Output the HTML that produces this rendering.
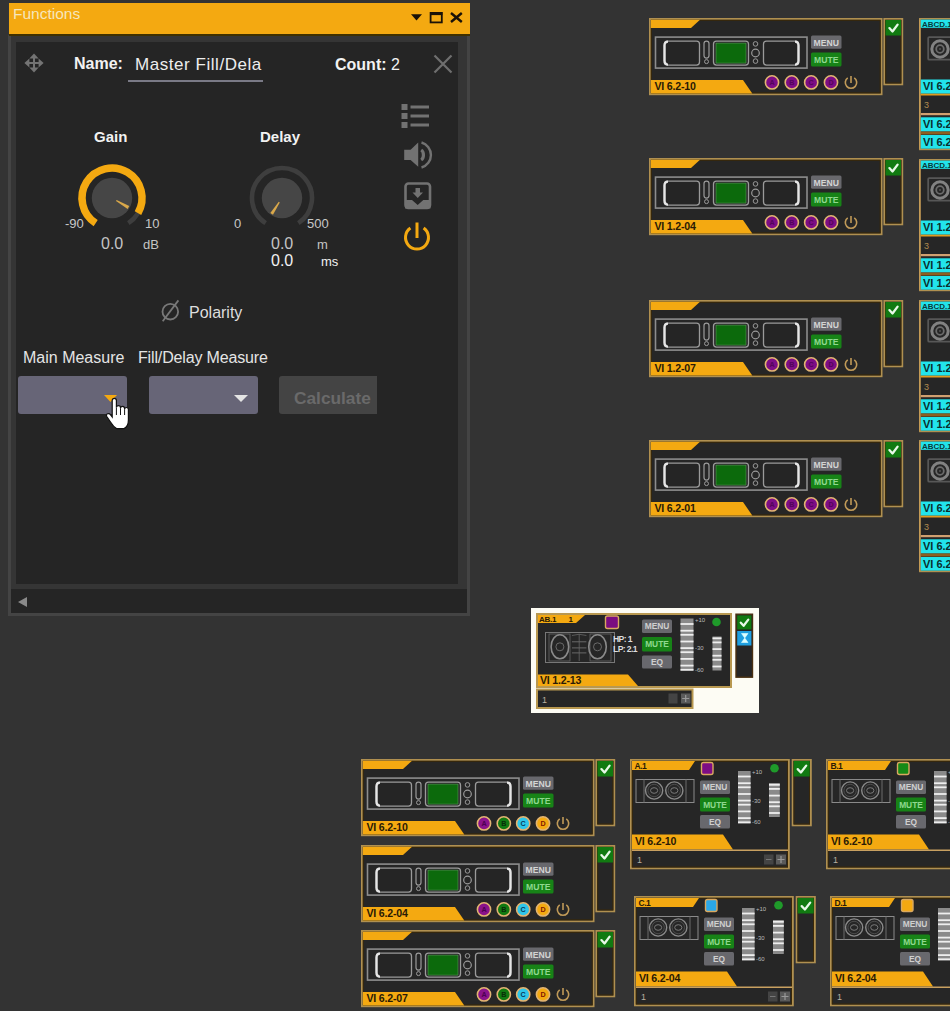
<!DOCTYPE html><html><head><meta charset="utf-8"><style>html,body{margin:0;padding:0;} body{width:950px;height:1011px;overflow:hidden;background:#333333;position:relative;font-family:"Liberation Sans", sans-serif;}.a{position:absolute;white-space:nowrap;}</style></head><body><div class="a" style="left:8px;top:3px;width:462px;height:613px;background:#353535;"></div><div class="a" style="left:8px;top:35px;width:3px;height:581px;background:#444444;"></div><div class="a" style="left:467px;top:35px;width:3px;height:581px;background:#444444;"></div><div class="a" style="left:8px;top:613px;width:462px;height:3px;background:#444444;"></div><div class="a" style="left:9px;top:3px;width:461px;height:32px;background:#f4a911;"></div><div class="a" style="left:9px;top:34px;width:461px;height:1.5px;background:#3f3000;"></div><div class="a" style="left:13px;top:5px;font-size:15.5px;line-height:18px;color:#f6e6bc;">Functions</div><svg class="a" style="left:405px;top:8px" width="62" height="20" viewBox="0 0 62 20"><polygon points="6,6.3 17,6.3 11.5,12.6" fill="#1a1208"/><rect x="25.6" y="4.9" width="11.2" height="9.5" fill="none" stroke="#1a1208" stroke-width="1.8"/><rect x="25" y="4.1" width="12.4" height="3" fill="#1a1208"/><path d="M46,5 L56.8,14 M56.8,5 L46,14" stroke="#1a1208" stroke-width="2.4"/></svg><div class="a" style="left:16px;top:42px;width:442px;height:542px;background:#252525;"></div><div class="a" style="left:11px;top:589px;width:456px;height:24px;background:#252525;"></div><svg class="a" style="left:15px;top:595px" width="16" height="14"><polygon points="3,7 12,2 12,12" fill="#8a8a8a"/></svg><svg class="a" style="left:24px;top:53px" width="20" height="20" viewBox="0 0 20 20"><path d="M10,3 L10,17 M3,10 L17,10" stroke="#747474" stroke-width="2"/><polygon points="10,0.4 5.4,5.4 14.6,5.4" fill="#747474"/><polygon points="10,19.6 5.4,14.6 14.6,14.6" fill="#747474"/><polygon points="0.4,10 5.4,5.4 5.4,14.6" fill="#747474"/><polygon points="19.6,10 14.6,5.4 14.6,14.6" fill="#747474"/></svg><div class="a" style="left:74px;top:54px;font-size:16px;font-weight:bold;line-height:19px;color:#f2f2f2;">Name:</div><div class="a" style="left:135px;top:54.5px;font-size:17px;line-height:20px;color:#eeeeee;letter-spacing:0.55px;">Master Fill/Dela</div><div class="a" style="left:128px;top:80px;width:135px;height:2px;background:#7a7a86;"></div><div class="a" style="left:335px;top:54.5px;font-size:16px;font-weight:bold;line-height:19px;color:#f2f2f2;">Count: <span style="font-weight:normal">2</span></div><svg class="a" style="left:432px;top:54px" width="22" height="20" viewBox="0 0 22 20"><path d="M2.5,1.5 L19.5,18.5 M19.5,1.5 L2.5,18.5" stroke="#6f6f6f" stroke-width="2.2"/></svg><div class="a" style="left:94px;top:128px;font-size:15px;font-weight:bold;line-height:18px;color:#f2f2f2;">Gain</div><div class="a" style="left:260px;top:128px;font-size:15px;font-weight:bold;line-height:18px;color:#f2f2f2;">Delay</div><svg class="a" style="left:72px;top:158px" width="80" height="80" viewBox="72 158 80 80"><path d="M95.66,223.16 A30,30 0 1 1 128.34,223.16" fill="none" stroke="#3e3e3e" stroke-width="4.6"/><path d="M95.66,223.16 A30,30 0 1 1 137.98,213.00" fill="none" stroke="#f4a911" stroke-width="7.5"/><circle cx="112" cy="198" r="20.2" fill="#464646"/><polygon points="116.03,201.02 127.65,208.89 129.25,206.11 116.63,199.98" fill="#d9a84a"/></svg><svg class="a" style="left:242px;top:158px" width="80" height="80" viewBox="242 158 80 80"><path d="M265.66,223.16 A30,30 0 1 1 298.34,223.16" fill="none" stroke="#3e3e3e" stroke-width="4.6"/><circle cx="282" cy="198" r="20.2" fill="#464646"/><polygon points="278.77,201.87 270.31,213.06 272.99,214.81 279.78,202.52" fill="#d9a84a"/></svg><div class="a" style="left:65px;top:217px;font-size:13px;line-height:14px;color:#c8c8c8;">-90</div><div class="a" style="left:145px;top:217px;font-size:13px;line-height:14px;color:#c8c8c8;">10</div><div class="a" style="left:234px;top:217px;font-size:13px;line-height:14px;color:#c8c8c8;">0</div><div class="a" style="left:307px;top:217px;font-size:13px;line-height:14px;color:#c8c8c8;">500</div><div class="a" style="left:101px;top:235px;font-size:16px;line-height:18px;color:#c4c4c4;">0.0</div><div class="a" style="left:143px;top:237px;font-size:13px;line-height:15px;color:#c4c4c4;">dB</div><div class="a" style="left:271px;top:235px;font-size:16px;line-height:18px;color:#c4c4c4;">0.0</div><div class="a" style="left:317px;top:237px;font-size:13px;line-height:15px;color:#c4c4c4;">m</div><div class="a" style="left:271px;top:252px;font-size:16px;line-height:18px;color:#f2f2f2;">0.0</div><div class="a" style="left:321px;top:254px;font-size:13px;line-height:15px;color:#f2f2f2;">ms</div><svg class="a" style="left:398px;top:100px" width="40" height="155" viewBox="398 100 40 155"><rect x="401.5" y="104" width="6" height="6" fill="#727272"/><rect x="401.5" y="113" width="6" height="6" fill="#727272"/><rect x="401.5" y="122" width="6" height="6" fill="#727272"/><rect x="410.5" y="105.5" width="18.5" height="3" fill="#727272"/><rect x="410.5" y="114.5" width="18.5" height="3" fill="#727272"/><rect x="410.5" y="123.5" width="18.5" height="3" fill="#727272"/><polygon points="404.2,149.7 410.6,149.7 418.2,142.6 418.2,166.8 410.6,160.1 404.2,160.1" fill="#727272"/><path d="M421.2,150 A3.6,5.4 0 0 1 421.2,160" fill="none" stroke="#727272" stroke-width="3.2"/><path d="M421.5,142.5 A13,13 0 0 1 421.5,167.5" fill="none" stroke="#727272" stroke-width="2.4"/><rect x="405.5" y="183.5" width="24.5" height="24.5" rx="3" fill="none" stroke="#727272" stroke-width="2.6"/><polygon points="405,200 412,200 417.7,205 423.3,200 430.5,200 430.5,208.5 405,208.5" fill="#727272"/><polygon points="415.5,188 420,188 420,192.5 423,192.5 417.75,198 412.5,192.5 415.5,192.5" fill="#727272"/><path d="M423.60,228.08 A11.5,11.5 0 1 1 410.40,228.08" fill="none" stroke="#f4a911" stroke-width="3"/><line x1="417" y1="222.5" x2="417" y2="238" stroke="#f4a911" stroke-width="3"/></svg><svg class="a" style="left:158px;top:298px" width="26" height="26" viewBox="158 298 26 26"><circle cx="170.3" cy="311.7" r="7.8" fill="none" stroke="#787878" stroke-width="1.8"/><line x1="162.7" y1="321.3" x2="178.4" y2="300.4" stroke="#787878" stroke-width="1.8"/></svg><div class="a" style="left:189px;top:303px;font-size:16px;line-height:19px;color:#dedede;">Polarity</div><div class="a" style="left:23px;top:348px;font-size:16px;line-height:19px;color:#e4e4e4;">Main Measure</div><div class="a" style="left:138px;top:348px;font-size:16px;line-height:19px;color:#e4e4e4;letter-spacing:-0.15px;">Fill/Delay Measure</div><div class="a" style="left:18px;top:376px;width:109px;height:38px;border-radius:3px;background:#676577;"></div><div class="a" style="left:149px;top:376px;width:109px;height:38px;border-radius:3px;background:#676577;"></div><svg class="a" style="left:100px;top:392px" width="20" height="12"><polygon points="4,3 17,3 10.5,10" fill="#f4a911"/></svg><svg class="a" style="left:231px;top:392px" width="20" height="12"><polygon points="3,3 17,3 10,10" fill="#e4e4e4"/></svg><div class="a" style="left:279px;top:376px;width:98px;height:38px;border-radius:3px 0 0 3px;background:#444444;"></div><div class="a" style="left:294px;top:387.5px;font-size:17.3px;font-weight:bold;line-height:20px;color:#6a6a6a;">Calculate</div><svg class="a" style="left:104px;top:396px" width="28" height="36" viewBox="0 0 28 36"><path d="M8.2,4.5 Q8.2,2.3 10.3,2.3 Q12.4,2.3 12.4,4.5 L12.4,11.5 Q12.6,9.6 14.5,9.6 Q16.4,9.6 16.5,11.5 L16.5,12.2 Q16.7,10.3 18.6,10.3 Q20.5,10.3 20.6,12.4 L20.6,13.2 Q20.8,11.5 22.5,11.5 Q24.4,11.5 24.4,13.6 L24.4,24 Q24.4,30.5 20,32.6 L12.5,32.6 Q9.5,30.8 6.5,26 L2.8,20.5 Q1.8,18.6 3.6,17.8 Q5.4,17.2 6.6,18.8 L8.2,21 Z" fill="#fff" stroke="#111" stroke-width="1.2"/><path d="M12.4,11.5 V19 M16.5,12.2 V19 M20.6,13.2 V19" stroke="#111" stroke-width="1"/></svg><svg style="position:absolute;left:649px;top:18px" width="258" height="79" viewBox="0 0 258 79"><rect x="0.9" y="0.9" width="231.7" height="75.4" fill="#262626" stroke="#b09050" stroke-width="1.8"/><rect x="2.3" y="2.3" width="228.9" height="72.6" fill="none" stroke="#3a2808" stroke-width="1"/><polygon points="1.8,1.8 51,1.8 42,10 1.8,10" fill="#f4a911"/><g transform="translate(0,0.6)"><rect x="6.5" y="18.5" width="151.5" height="31" fill="none" stroke="#8d8d8d" stroke-width="1.6"/><rect x="15.5" y="22.5" width="35" height="24" rx="3" fill="#252525" stroke="#9a9a9a" stroke-width="1.3"/><path d="M19,23 Q15.5,23 15.5,27 L15.5,42 Q15.5,46 19,46" fill="none" stroke="#e6e6e6" stroke-width="2.4"/><rect x="55" y="22.5" width="5" height="17" rx="2.5" fill="none" stroke="#9a9a9a" stroke-width="1.2"/><circle cx="57.5" cy="43" r="2" fill="none" stroke="#9a9a9a" stroke-width="1"/><rect x="64.5" y="22.5" width="35" height="24" rx="3" fill="#252525" stroke="#9a9a9a" stroke-width="1.3"/><rect x="67" y="24.5" width="30" height="20" fill="#0c6a0c" stroke="#5a9a5a" stroke-width="0.6"/><circle cx="106.5" cy="25.3" r="2.3" fill="none" stroke="#9a9a9a" stroke-width="1"/><circle cx="106.5" cy="34.4" r="3.8" fill="none" stroke="#9a9a9a" stroke-width="1.2"/><circle cx="106.5" cy="42.5" r="2.3" fill="none" stroke="#9a9a9a" stroke-width="1"/><rect x="114.5" y="22.5" width="35" height="24" rx="3" fill="#252525" stroke="#9a9a9a" stroke-width="1.3"/><path d="M146,23 Q149.5,23 149.5,27 L149.5,42 Q149.5,46 146,46" fill="none" stroke="#e6e6e6" stroke-width="2.4"/></g><rect x="162" y="17.5" width="30.5" height="13.2" rx="1.5" fill="#68686d"/><text x="177.2" y="27.6" font-family='"Liberation Sans", sans-serif' font-size="8.6" font-weight="bold" fill="#d4d4d4" text-anchor="middle">MENU</text><rect x="162" y="34.5" width="30.5" height="14" rx="1.5" fill="#178317"/><text x="177.2" y="45" font-family='"Liberation Sans", sans-serif' font-size="8.6" font-weight="bold" fill="#8fd88f" text-anchor="middle">MUTE</text><polygon points="1.8,62 94,62 103.3,75.5 1.8,75.5" fill="#f4a911"/><text x="5.5" y="72" font-family='"Liberation Sans", sans-serif' font-size="10.6" font-weight="bold" fill="#2a1a05" letter-spacing="-0.2">VI 6.2-10</text><circle cx="123" cy="64.4" r="6.6" fill="#7d0d85" stroke="#e2b472" stroke-width="1.6"/><text x="123" y="67.2" font-family='"Liberation Sans", sans-serif' font-size="7.2" font-weight="bold" fill="#52045a" text-anchor="middle">A</text><circle cx="142.8" cy="64.4" r="6.6" fill="#7d0d85" stroke="#e2b472" stroke-width="1.6"/><text x="142.8" y="67.2" font-family='"Liberation Sans", sans-serif' font-size="7.2" font-weight="bold" fill="#52045a" text-anchor="middle">B</text><circle cx="162.2" cy="64.4" r="6.6" fill="#7d0d85" stroke="#e2b472" stroke-width="1.6"/><text x="162.2" y="67.2" font-family='"Liberation Sans", sans-serif' font-size="7.2" font-weight="bold" fill="#52045a" text-anchor="middle">C</text><circle cx="182" cy="64.4" r="6.6" fill="#7d0d85" stroke="#e2b472" stroke-width="1.6"/><text x="182" y="67.2" font-family='"Liberation Sans", sans-serif' font-size="7.2" font-weight="bold" fill="#52045a" text-anchor="middle">D</text><path d="M205.27,59.93 A5.7,5.7 0 1 1 198.73,59.93" fill="none" stroke="#c09a58" stroke-width="1.6"/><line x1="202" y1="57.90" x2="202" y2="65.10" stroke="#c09a58" stroke-width="1.6"/><rect x="235.3" y="0.9" width="18" height="65.5" fill="#262626" stroke="#b09050" stroke-width="1.8"/><rect x="236.7" y="2.3" width="15.2" height="62.7" fill="none" stroke="#3a2808" stroke-width="1"/><rect x="236.5" y="2" width="15.5" height="15.5" fill="#117a11"/><path d="M240.4,10.1 L243.5,13.5 L248.6,6.6" fill="none" stroke="#e8f8e8" stroke-width="2.3" stroke-linecap="round" stroke-linejoin="round"/></svg><svg style="position:absolute;left:649px;top:158px" width="258" height="79" viewBox="0 0 258 79"><rect x="0.9" y="0.9" width="231.7" height="75.4" fill="#262626" stroke="#b09050" stroke-width="1.8"/><rect x="2.3" y="2.3" width="228.9" height="72.6" fill="none" stroke="#3a2808" stroke-width="1"/><polygon points="1.8,1.8 51,1.8 42,10 1.8,10" fill="#f4a911"/><g transform="translate(0,0.6)"><rect x="6.5" y="18.5" width="151.5" height="31" fill="none" stroke="#8d8d8d" stroke-width="1.6"/><rect x="15.5" y="22.5" width="35" height="24" rx="3" fill="#252525" stroke="#9a9a9a" stroke-width="1.3"/><path d="M19,23 Q15.5,23 15.5,27 L15.5,42 Q15.5,46 19,46" fill="none" stroke="#e6e6e6" stroke-width="2.4"/><rect x="55" y="22.5" width="5" height="17" rx="2.5" fill="none" stroke="#9a9a9a" stroke-width="1.2"/><circle cx="57.5" cy="43" r="2" fill="none" stroke="#9a9a9a" stroke-width="1"/><rect x="64.5" y="22.5" width="35" height="24" rx="3" fill="#252525" stroke="#9a9a9a" stroke-width="1.3"/><rect x="67" y="24.5" width="30" height="20" fill="#0c6a0c" stroke="#5a9a5a" stroke-width="0.6"/><circle cx="106.5" cy="25.3" r="2.3" fill="none" stroke="#9a9a9a" stroke-width="1"/><circle cx="106.5" cy="34.4" r="3.8" fill="none" stroke="#9a9a9a" stroke-width="1.2"/><circle cx="106.5" cy="42.5" r="2.3" fill="none" stroke="#9a9a9a" stroke-width="1"/><rect x="114.5" y="22.5" width="35" height="24" rx="3" fill="#252525" stroke="#9a9a9a" stroke-width="1.3"/><path d="M146,23 Q149.5,23 149.5,27 L149.5,42 Q149.5,46 146,46" fill="none" stroke="#e6e6e6" stroke-width="2.4"/></g><rect x="162" y="17.5" width="30.5" height="13.2" rx="1.5" fill="#68686d"/><text x="177.2" y="27.6" font-family='"Liberation Sans", sans-serif' font-size="8.6" font-weight="bold" fill="#d4d4d4" text-anchor="middle">MENU</text><rect x="162" y="34.5" width="30.5" height="14" rx="1.5" fill="#178317"/><text x="177.2" y="45" font-family='"Liberation Sans", sans-serif' font-size="8.6" font-weight="bold" fill="#8fd88f" text-anchor="middle">MUTE</text><polygon points="1.8,62 94,62 103.3,75.5 1.8,75.5" fill="#f4a911"/><text x="5.5" y="72" font-family='"Liberation Sans", sans-serif' font-size="10.6" font-weight="bold" fill="#2a1a05" letter-spacing="-0.2">VI 1.2-04</text><circle cx="123" cy="64.4" r="6.6" fill="#7d0d85" stroke="#e2b472" stroke-width="1.6"/><text x="123" y="67.2" font-family='"Liberation Sans", sans-serif' font-size="7.2" font-weight="bold" fill="#52045a" text-anchor="middle">A</text><circle cx="142.8" cy="64.4" r="6.6" fill="#7d0d85" stroke="#e2b472" stroke-width="1.6"/><text x="142.8" y="67.2" font-family='"Liberation Sans", sans-serif' font-size="7.2" font-weight="bold" fill="#52045a" text-anchor="middle">B</text><circle cx="162.2" cy="64.4" r="6.6" fill="#7d0d85" stroke="#e2b472" stroke-width="1.6"/><text x="162.2" y="67.2" font-family='"Liberation Sans", sans-serif' font-size="7.2" font-weight="bold" fill="#52045a" text-anchor="middle">C</text><circle cx="182" cy="64.4" r="6.6" fill="#7d0d85" stroke="#e2b472" stroke-width="1.6"/><text x="182" y="67.2" font-family='"Liberation Sans", sans-serif' font-size="7.2" font-weight="bold" fill="#52045a" text-anchor="middle">D</text><path d="M205.27,59.93 A5.7,5.7 0 1 1 198.73,59.93" fill="none" stroke="#c09a58" stroke-width="1.6"/><line x1="202" y1="57.90" x2="202" y2="65.10" stroke="#c09a58" stroke-width="1.6"/><rect x="235.3" y="0.9" width="18" height="65.5" fill="#262626" stroke="#b09050" stroke-width="1.8"/><rect x="236.7" y="2.3" width="15.2" height="62.7" fill="none" stroke="#3a2808" stroke-width="1"/><rect x="236.5" y="2" width="15.5" height="15.5" fill="#117a11"/><path d="M240.4,10.1 L243.5,13.5 L248.6,6.6" fill="none" stroke="#e8f8e8" stroke-width="2.3" stroke-linecap="round" stroke-linejoin="round"/></svg><svg style="position:absolute;left:649px;top:300px" width="258" height="79" viewBox="0 0 258 79"><rect x="0.9" y="0.9" width="231.7" height="75.4" fill="#262626" stroke="#b09050" stroke-width="1.8"/><rect x="2.3" y="2.3" width="228.9" height="72.6" fill="none" stroke="#3a2808" stroke-width="1"/><polygon points="1.8,1.8 51,1.8 42,10 1.8,10" fill="#f4a911"/><g transform="translate(0,0.6)"><rect x="6.5" y="18.5" width="151.5" height="31" fill="none" stroke="#8d8d8d" stroke-width="1.6"/><rect x="15.5" y="22.5" width="35" height="24" rx="3" fill="#252525" stroke="#9a9a9a" stroke-width="1.3"/><path d="M19,23 Q15.5,23 15.5,27 L15.5,42 Q15.5,46 19,46" fill="none" stroke="#e6e6e6" stroke-width="2.4"/><rect x="55" y="22.5" width="5" height="17" rx="2.5" fill="none" stroke="#9a9a9a" stroke-width="1.2"/><circle cx="57.5" cy="43" r="2" fill="none" stroke="#9a9a9a" stroke-width="1"/><rect x="64.5" y="22.5" width="35" height="24" rx="3" fill="#252525" stroke="#9a9a9a" stroke-width="1.3"/><rect x="67" y="24.5" width="30" height="20" fill="#0c6a0c" stroke="#5a9a5a" stroke-width="0.6"/><circle cx="106.5" cy="25.3" r="2.3" fill="none" stroke="#9a9a9a" stroke-width="1"/><circle cx="106.5" cy="34.4" r="3.8" fill="none" stroke="#9a9a9a" stroke-width="1.2"/><circle cx="106.5" cy="42.5" r="2.3" fill="none" stroke="#9a9a9a" stroke-width="1"/><rect x="114.5" y="22.5" width="35" height="24" rx="3" fill="#252525" stroke="#9a9a9a" stroke-width="1.3"/><path d="M146,23 Q149.5,23 149.5,27 L149.5,42 Q149.5,46 146,46" fill="none" stroke="#e6e6e6" stroke-width="2.4"/></g><rect x="162" y="17.5" width="30.5" height="13.2" rx="1.5" fill="#68686d"/><text x="177.2" y="27.6" font-family='"Liberation Sans", sans-serif' font-size="8.6" font-weight="bold" fill="#d4d4d4" text-anchor="middle">MENU</text><rect x="162" y="34.5" width="30.5" height="14" rx="1.5" fill="#178317"/><text x="177.2" y="45" font-family='"Liberation Sans", sans-serif' font-size="8.6" font-weight="bold" fill="#8fd88f" text-anchor="middle">MUTE</text><polygon points="1.8,62 94,62 103.3,75.5 1.8,75.5" fill="#f4a911"/><text x="5.5" y="72" font-family='"Liberation Sans", sans-serif' font-size="10.6" font-weight="bold" fill="#2a1a05" letter-spacing="-0.2">VI 1.2-07</text><circle cx="123" cy="64.4" r="6.6" fill="#7d0d85" stroke="#e2b472" stroke-width="1.6"/><text x="123" y="67.2" font-family='"Liberation Sans", sans-serif' font-size="7.2" font-weight="bold" fill="#52045a" text-anchor="middle">A</text><circle cx="142.8" cy="64.4" r="6.6" fill="#7d0d85" stroke="#e2b472" stroke-width="1.6"/><text x="142.8" y="67.2" font-family='"Liberation Sans", sans-serif' font-size="7.2" font-weight="bold" fill="#52045a" text-anchor="middle">B</text><circle cx="162.2" cy="64.4" r="6.6" fill="#7d0d85" stroke="#e2b472" stroke-width="1.6"/><text x="162.2" y="67.2" font-family='"Liberation Sans", sans-serif' font-size="7.2" font-weight="bold" fill="#52045a" text-anchor="middle">C</text><circle cx="182" cy="64.4" r="6.6" fill="#7d0d85" stroke="#e2b472" stroke-width="1.6"/><text x="182" y="67.2" font-family='"Liberation Sans", sans-serif' font-size="7.2" font-weight="bold" fill="#52045a" text-anchor="middle">D</text><path d="M205.27,59.93 A5.7,5.7 0 1 1 198.73,59.93" fill="none" stroke="#c09a58" stroke-width="1.6"/><line x1="202" y1="57.90" x2="202" y2="65.10" stroke="#c09a58" stroke-width="1.6"/><rect x="235.3" y="0.9" width="18" height="65.5" fill="#262626" stroke="#b09050" stroke-width="1.8"/><rect x="236.7" y="2.3" width="15.2" height="62.7" fill="none" stroke="#3a2808" stroke-width="1"/><rect x="236.5" y="2" width="15.5" height="15.5" fill="#117a11"/><path d="M240.4,10.1 L243.5,13.5 L248.6,6.6" fill="none" stroke="#e8f8e8" stroke-width="2.3" stroke-linecap="round" stroke-linejoin="round"/></svg><svg style="position:absolute;left:649px;top:440px" width="258" height="79" viewBox="0 0 258 79"><rect x="0.9" y="0.9" width="231.7" height="75.4" fill="#262626" stroke="#b09050" stroke-width="1.8"/><rect x="2.3" y="2.3" width="228.9" height="72.6" fill="none" stroke="#3a2808" stroke-width="1"/><polygon points="1.8,1.8 51,1.8 42,10 1.8,10" fill="#f4a911"/><g transform="translate(0,0.6)"><rect x="6.5" y="18.5" width="151.5" height="31" fill="none" stroke="#8d8d8d" stroke-width="1.6"/><rect x="15.5" y="22.5" width="35" height="24" rx="3" fill="#252525" stroke="#9a9a9a" stroke-width="1.3"/><path d="M19,23 Q15.5,23 15.5,27 L15.5,42 Q15.5,46 19,46" fill="none" stroke="#e6e6e6" stroke-width="2.4"/><rect x="55" y="22.5" width="5" height="17" rx="2.5" fill="none" stroke="#9a9a9a" stroke-width="1.2"/><circle cx="57.5" cy="43" r="2" fill="none" stroke="#9a9a9a" stroke-width="1"/><rect x="64.5" y="22.5" width="35" height="24" rx="3" fill="#252525" stroke="#9a9a9a" stroke-width="1.3"/><rect x="67" y="24.5" width="30" height="20" fill="#0c6a0c" stroke="#5a9a5a" stroke-width="0.6"/><circle cx="106.5" cy="25.3" r="2.3" fill="none" stroke="#9a9a9a" stroke-width="1"/><circle cx="106.5" cy="34.4" r="3.8" fill="none" stroke="#9a9a9a" stroke-width="1.2"/><circle cx="106.5" cy="42.5" r="2.3" fill="none" stroke="#9a9a9a" stroke-width="1"/><rect x="114.5" y="22.5" width="35" height="24" rx="3" fill="#252525" stroke="#9a9a9a" stroke-width="1.3"/><path d="M146,23 Q149.5,23 149.5,27 L149.5,42 Q149.5,46 146,46" fill="none" stroke="#e6e6e6" stroke-width="2.4"/></g><rect x="162" y="17.5" width="30.5" height="13.2" rx="1.5" fill="#68686d"/><text x="177.2" y="27.6" font-family='"Liberation Sans", sans-serif' font-size="8.6" font-weight="bold" fill="#d4d4d4" text-anchor="middle">MENU</text><rect x="162" y="34.5" width="30.5" height="14" rx="1.5" fill="#178317"/><text x="177.2" y="45" font-family='"Liberation Sans", sans-serif' font-size="8.6" font-weight="bold" fill="#8fd88f" text-anchor="middle">MUTE</text><polygon points="1.8,62 94,62 103.3,75.5 1.8,75.5" fill="#f4a911"/><text x="5.5" y="72" font-family='"Liberation Sans", sans-serif' font-size="10.6" font-weight="bold" fill="#2a1a05" letter-spacing="-0.2">VI 6.2-01</text><circle cx="123" cy="64.4" r="6.6" fill="#7d0d85" stroke="#e2b472" stroke-width="1.6"/><text x="123" y="67.2" font-family='"Liberation Sans", sans-serif' font-size="7.2" font-weight="bold" fill="#52045a" text-anchor="middle">A</text><circle cx="142.8" cy="64.4" r="6.6" fill="#7d0d85" stroke="#e2b472" stroke-width="1.6"/><text x="142.8" y="67.2" font-family='"Liberation Sans", sans-serif' font-size="7.2" font-weight="bold" fill="#52045a" text-anchor="middle">B</text><circle cx="162.2" cy="64.4" r="6.6" fill="#7d0d85" stroke="#e2b472" stroke-width="1.6"/><text x="162.2" y="67.2" font-family='"Liberation Sans", sans-serif' font-size="7.2" font-weight="bold" fill="#52045a" text-anchor="middle">C</text><circle cx="182" cy="64.4" r="6.6" fill="#7d0d85" stroke="#e2b472" stroke-width="1.6"/><text x="182" y="67.2" font-family='"Liberation Sans", sans-serif' font-size="7.2" font-weight="bold" fill="#52045a" text-anchor="middle">D</text><path d="M205.27,59.93 A5.7,5.7 0 1 1 198.73,59.93" fill="none" stroke="#c09a58" stroke-width="1.6"/><line x1="202" y1="57.90" x2="202" y2="65.10" stroke="#c09a58" stroke-width="1.6"/><rect x="235.3" y="0.9" width="18" height="65.5" fill="#262626" stroke="#b09050" stroke-width="1.8"/><rect x="236.7" y="2.3" width="15.2" height="62.7" fill="none" stroke="#3a2808" stroke-width="1"/><rect x="236.5" y="2" width="15.5" height="15.5" fill="#117a11"/><path d="M240.4,10.1 L243.5,13.5 L248.6,6.6" fill="none" stroke="#e8f8e8" stroke-width="2.3" stroke-linecap="round" stroke-linejoin="round"/></svg><svg style="position:absolute;left:361px;top:759px" width="258" height="79" viewBox="0 0 258 79"><rect x="0.9" y="0.9" width="231.7" height="75.4" fill="#262626" stroke="#b09050" stroke-width="1.8"/><rect x="2.3" y="2.3" width="228.9" height="72.6" fill="none" stroke="#3a2808" stroke-width="1"/><polygon points="1.8,1.8 51,1.8 42,10 1.8,10" fill="#f4a911"/><g transform="translate(0,0.6)"><rect x="6.5" y="18.5" width="151.5" height="31" fill="none" stroke="#8d8d8d" stroke-width="1.6"/><rect x="15.5" y="22.5" width="35" height="24" rx="3" fill="#252525" stroke="#9a9a9a" stroke-width="1.3"/><path d="M19,23 Q15.5,23 15.5,27 L15.5,42 Q15.5,46 19,46" fill="none" stroke="#e6e6e6" stroke-width="2.4"/><rect x="55" y="22.5" width="5" height="17" rx="2.5" fill="none" stroke="#9a9a9a" stroke-width="1.2"/><circle cx="57.5" cy="43" r="2" fill="none" stroke="#9a9a9a" stroke-width="1"/><rect x="64.5" y="22.5" width="35" height="24" rx="3" fill="#252525" stroke="#9a9a9a" stroke-width="1.3"/><rect x="67" y="24.5" width="30" height="20" fill="#0c6a0c" stroke="#5a9a5a" stroke-width="0.6"/><circle cx="106.5" cy="25.3" r="2.3" fill="none" stroke="#9a9a9a" stroke-width="1"/><circle cx="106.5" cy="34.4" r="3.8" fill="none" stroke="#9a9a9a" stroke-width="1.2"/><circle cx="106.5" cy="42.5" r="2.3" fill="none" stroke="#9a9a9a" stroke-width="1"/><rect x="114.5" y="22.5" width="35" height="24" rx="3" fill="#252525" stroke="#9a9a9a" stroke-width="1.3"/><path d="M146,23 Q149.5,23 149.5,27 L149.5,42 Q149.5,46 146,46" fill="none" stroke="#e6e6e6" stroke-width="2.4"/></g><rect x="162" y="17.5" width="30.5" height="13.2" rx="1.5" fill="#68686d"/><text x="177.2" y="27.6" font-family='"Liberation Sans", sans-serif' font-size="8.6" font-weight="bold" fill="#d4d4d4" text-anchor="middle">MENU</text><rect x="162" y="34.5" width="30.5" height="14" rx="1.5" fill="#178317"/><text x="177.2" y="45" font-family='"Liberation Sans", sans-serif' font-size="8.6" font-weight="bold" fill="#8fd88f" text-anchor="middle">MUTE</text><polygon points="1.8,62 94,62 103.3,75.5 1.8,75.5" fill="#f4a911"/><text x="5.5" y="72" font-family='"Liberation Sans", sans-serif' font-size="10.6" font-weight="bold" fill="#2a1a05" letter-spacing="-0.2">VI 6.2-10</text><circle cx="123" cy="64.4" r="6.6" fill="#8a128a" stroke="#e2b472" stroke-width="1.6"/><text x="123" y="67.2" font-family='"Liberation Sans", sans-serif' font-size="7.2" font-weight="bold" fill="#4a0050" text-anchor="middle">A</text><circle cx="142.8" cy="64.4" r="6.6" fill="#117a11" stroke="#e2b472" stroke-width="1.6"/><text x="142.8" y="67.2" font-family='"Liberation Sans", sans-serif' font-size="7.2" font-weight="bold" fill="#0a2a0a" text-anchor="middle">B</text><circle cx="162.2" cy="64.4" r="6.6" fill="#2ec6ea" stroke="#e2b472" stroke-width="1.6"/><text x="162.2" y="67.2" font-family='"Liberation Sans", sans-serif' font-size="7.2" font-weight="bold" fill="#0a3a5a" text-anchor="middle">C</text><circle cx="182" cy="64.4" r="6.6" fill="#f4a911" stroke="#e2b472" stroke-width="1.6"/><text x="182" y="67.2" font-family='"Liberation Sans", sans-serif' font-size="7.2" font-weight="bold" fill="#801800" text-anchor="middle">D</text><path d="M205.27,59.93 A5.7,5.7 0 1 1 198.73,59.93" fill="none" stroke="#c09a58" stroke-width="1.6"/><line x1="202" y1="57.90" x2="202" y2="65.10" stroke="#c09a58" stroke-width="1.6"/><rect x="235.3" y="0.9" width="18" height="65.5" fill="#262626" stroke="#b09050" stroke-width="1.8"/><rect x="236.7" y="2.3" width="15.2" height="62.7" fill="none" stroke="#3a2808" stroke-width="1"/><rect x="236.5" y="2" width="15.5" height="15.5" fill="#117a11"/><path d="M240.4,10.1 L243.5,13.5 L248.6,6.6" fill="none" stroke="#e8f8e8" stroke-width="2.3" stroke-linecap="round" stroke-linejoin="round"/></svg><svg style="position:absolute;left:361px;top:845px" width="258" height="79" viewBox="0 0 258 79"><rect x="0.9" y="0.9" width="231.7" height="75.4" fill="#262626" stroke="#b09050" stroke-width="1.8"/><rect x="2.3" y="2.3" width="228.9" height="72.6" fill="none" stroke="#3a2808" stroke-width="1"/><polygon points="1.8,1.8 51,1.8 42,10 1.8,10" fill="#f4a911"/><g transform="translate(0,0.6)"><rect x="6.5" y="18.5" width="151.5" height="31" fill="none" stroke="#8d8d8d" stroke-width="1.6"/><rect x="15.5" y="22.5" width="35" height="24" rx="3" fill="#252525" stroke="#9a9a9a" stroke-width="1.3"/><path d="M19,23 Q15.5,23 15.5,27 L15.5,42 Q15.5,46 19,46" fill="none" stroke="#e6e6e6" stroke-width="2.4"/><rect x="55" y="22.5" width="5" height="17" rx="2.5" fill="none" stroke="#9a9a9a" stroke-width="1.2"/><circle cx="57.5" cy="43" r="2" fill="none" stroke="#9a9a9a" stroke-width="1"/><rect x="64.5" y="22.5" width="35" height="24" rx="3" fill="#252525" stroke="#9a9a9a" stroke-width="1.3"/><rect x="67" y="24.5" width="30" height="20" fill="#0c6a0c" stroke="#5a9a5a" stroke-width="0.6"/><circle cx="106.5" cy="25.3" r="2.3" fill="none" stroke="#9a9a9a" stroke-width="1"/><circle cx="106.5" cy="34.4" r="3.8" fill="none" stroke="#9a9a9a" stroke-width="1.2"/><circle cx="106.5" cy="42.5" r="2.3" fill="none" stroke="#9a9a9a" stroke-width="1"/><rect x="114.5" y="22.5" width="35" height="24" rx="3" fill="#252525" stroke="#9a9a9a" stroke-width="1.3"/><path d="M146,23 Q149.5,23 149.5,27 L149.5,42 Q149.5,46 146,46" fill="none" stroke="#e6e6e6" stroke-width="2.4"/></g><rect x="162" y="17.5" width="30.5" height="13.2" rx="1.5" fill="#68686d"/><text x="177.2" y="27.6" font-family='"Liberation Sans", sans-serif' font-size="8.6" font-weight="bold" fill="#d4d4d4" text-anchor="middle">MENU</text><rect x="162" y="34.5" width="30.5" height="14" rx="1.5" fill="#178317"/><text x="177.2" y="45" font-family='"Liberation Sans", sans-serif' font-size="8.6" font-weight="bold" fill="#8fd88f" text-anchor="middle">MUTE</text><polygon points="1.8,62 94,62 103.3,75.5 1.8,75.5" fill="#f4a911"/><text x="5.5" y="72" font-family='"Liberation Sans", sans-serif' font-size="10.6" font-weight="bold" fill="#2a1a05" letter-spacing="-0.2">VI 6.2-04</text><circle cx="123" cy="64.4" r="6.6" fill="#8a128a" stroke="#e2b472" stroke-width="1.6"/><text x="123" y="67.2" font-family='"Liberation Sans", sans-serif' font-size="7.2" font-weight="bold" fill="#4a0050" text-anchor="middle">A</text><circle cx="142.8" cy="64.4" r="6.6" fill="#117a11" stroke="#e2b472" stroke-width="1.6"/><text x="142.8" y="67.2" font-family='"Liberation Sans", sans-serif' font-size="7.2" font-weight="bold" fill="#0a2a0a" text-anchor="middle">B</text><circle cx="162.2" cy="64.4" r="6.6" fill="#2ec6ea" stroke="#e2b472" stroke-width="1.6"/><text x="162.2" y="67.2" font-family='"Liberation Sans", sans-serif' font-size="7.2" font-weight="bold" fill="#0a3a5a" text-anchor="middle">C</text><circle cx="182" cy="64.4" r="6.6" fill="#f4a911" stroke="#e2b472" stroke-width="1.6"/><text x="182" y="67.2" font-family='"Liberation Sans", sans-serif' font-size="7.2" font-weight="bold" fill="#801800" text-anchor="middle">D</text><path d="M205.27,59.93 A5.7,5.7 0 1 1 198.73,59.93" fill="none" stroke="#c09a58" stroke-width="1.6"/><line x1="202" y1="57.90" x2="202" y2="65.10" stroke="#c09a58" stroke-width="1.6"/><rect x="235.3" y="0.9" width="18" height="65.5" fill="#262626" stroke="#b09050" stroke-width="1.8"/><rect x="236.7" y="2.3" width="15.2" height="62.7" fill="none" stroke="#3a2808" stroke-width="1"/><rect x="236.5" y="2" width="15.5" height="15.5" fill="#117a11"/><path d="M240.4,10.1 L243.5,13.5 L248.6,6.6" fill="none" stroke="#e8f8e8" stroke-width="2.3" stroke-linecap="round" stroke-linejoin="round"/></svg><svg style="position:absolute;left:361px;top:930px" width="258" height="79" viewBox="0 0 258 79"><rect x="0.9" y="0.9" width="231.7" height="75.4" fill="#262626" stroke="#b09050" stroke-width="1.8"/><rect x="2.3" y="2.3" width="228.9" height="72.6" fill="none" stroke="#3a2808" stroke-width="1"/><polygon points="1.8,1.8 51,1.8 42,10 1.8,10" fill="#f4a911"/><g transform="translate(0,0.6)"><rect x="6.5" y="18.5" width="151.5" height="31" fill="none" stroke="#8d8d8d" stroke-width="1.6"/><rect x="15.5" y="22.5" width="35" height="24" rx="3" fill="#252525" stroke="#9a9a9a" stroke-width="1.3"/><path d="M19,23 Q15.5,23 15.5,27 L15.5,42 Q15.5,46 19,46" fill="none" stroke="#e6e6e6" stroke-width="2.4"/><rect x="55" y="22.5" width="5" height="17" rx="2.5" fill="none" stroke="#9a9a9a" stroke-width="1.2"/><circle cx="57.5" cy="43" r="2" fill="none" stroke="#9a9a9a" stroke-width="1"/><rect x="64.5" y="22.5" width="35" height="24" rx="3" fill="#252525" stroke="#9a9a9a" stroke-width="1.3"/><rect x="67" y="24.5" width="30" height="20" fill="#0c6a0c" stroke="#5a9a5a" stroke-width="0.6"/><circle cx="106.5" cy="25.3" r="2.3" fill="none" stroke="#9a9a9a" stroke-width="1"/><circle cx="106.5" cy="34.4" r="3.8" fill="none" stroke="#9a9a9a" stroke-width="1.2"/><circle cx="106.5" cy="42.5" r="2.3" fill="none" stroke="#9a9a9a" stroke-width="1"/><rect x="114.5" y="22.5" width="35" height="24" rx="3" fill="#252525" stroke="#9a9a9a" stroke-width="1.3"/><path d="M146,23 Q149.5,23 149.5,27 L149.5,42 Q149.5,46 146,46" fill="none" stroke="#e6e6e6" stroke-width="2.4"/></g><rect x="162" y="17.5" width="30.5" height="13.2" rx="1.5" fill="#68686d"/><text x="177.2" y="27.6" font-family='"Liberation Sans", sans-serif' font-size="8.6" font-weight="bold" fill="#d4d4d4" text-anchor="middle">MENU</text><rect x="162" y="34.5" width="30.5" height="14" rx="1.5" fill="#178317"/><text x="177.2" y="45" font-family='"Liberation Sans", sans-serif' font-size="8.6" font-weight="bold" fill="#8fd88f" text-anchor="middle">MUTE</text><polygon points="1.8,62 94,62 103.3,75.5 1.8,75.5" fill="#f4a911"/><text x="5.5" y="72" font-family='"Liberation Sans", sans-serif' font-size="10.6" font-weight="bold" fill="#2a1a05" letter-spacing="-0.2">VI 6.2-07</text><circle cx="123" cy="64.4" r="6.6" fill="#8a128a" stroke="#e2b472" stroke-width="1.6"/><text x="123" y="67.2" font-family='"Liberation Sans", sans-serif' font-size="7.2" font-weight="bold" fill="#4a0050" text-anchor="middle">A</text><circle cx="142.8" cy="64.4" r="6.6" fill="#117a11" stroke="#e2b472" stroke-width="1.6"/><text x="142.8" y="67.2" font-family='"Liberation Sans", sans-serif' font-size="7.2" font-weight="bold" fill="#0a2a0a" text-anchor="middle">B</text><circle cx="162.2" cy="64.4" r="6.6" fill="#2ec6ea" stroke="#e2b472" stroke-width="1.6"/><text x="162.2" y="67.2" font-family='"Liberation Sans", sans-serif' font-size="7.2" font-weight="bold" fill="#0a3a5a" text-anchor="middle">C</text><circle cx="182" cy="64.4" r="6.6" fill="#f4a911" stroke="#e2b472" stroke-width="1.6"/><text x="182" y="67.2" font-family='"Liberation Sans", sans-serif' font-size="7.2" font-weight="bold" fill="#801800" text-anchor="middle">D</text><path d="M205.27,59.93 A5.7,5.7 0 1 1 198.73,59.93" fill="none" stroke="#c09a58" stroke-width="1.6"/><line x1="202" y1="57.90" x2="202" y2="65.10" stroke="#c09a58" stroke-width="1.6"/><rect x="235.3" y="0.9" width="18" height="65.5" fill="#262626" stroke="#b09050" stroke-width="1.8"/><rect x="236.7" y="2.3" width="15.2" height="62.7" fill="none" stroke="#3a2808" stroke-width="1"/><rect x="236.5" y="2" width="15.5" height="15.5" fill="#117a11"/><path d="M240.4,10.1 L243.5,13.5 L248.6,6.6" fill="none" stroke="#e8f8e8" stroke-width="2.3" stroke-linecap="round" stroke-linejoin="round"/></svg><svg style="position:absolute;left:919px;top:18px" width="40" height="134" viewBox="0 0 40 134"><rect x="0" y="0" width="40" height="132" fill="#262626"/><rect x="0" y="0" width="1.8" height="132" fill="#c49a55"/><rect x="0" y="0" width="40" height="1.6" fill="#b09050"/><rect x="1.8" y="1.6" width="40" height="8.2" fill="#22e4ec"/><text x="3" y="8.8" font-family='"Liberation Sans", sans-serif' font-size="8" font-weight="bold" fill="#0a3a3a">ABCD.1</text><rect x="9.2" y="19.2" width="23" height="22.5" rx="1" fill="none" stroke="#575757" stroke-width="1.8"/><circle cx="21" cy="31" r="8.2" fill="none" stroke="#828282" stroke-width="3"/><circle cx="21" cy="31" r="3.8" fill="none" stroke="#6c6c6c" stroke-width="1.8"/><circle cx="21" cy="31" r="1" fill="#555"/><rect x="1.8" y="61.5" width="40" height="14.2" fill="#22e4ec"/><text x="4" y="72" font-family='"Liberation Sans", sans-serif' font-size="11" font-weight="bold" fill="#0a2e2e">VI 6.2</text><rect x="1.8" y="75.7" width="40" height="1.8" fill="#e09a20"/><text x="5" y="89.5" font-family='"Liberation Sans", sans-serif' font-size="9" fill="#b08a50">3</text><rect x="1.8" y="95" width="40" height="2.2" fill="#d0a070"/><rect x="1.8" y="99.3" width="40" height="14.2" fill="#22e4ec"/><text x="4" y="110" font-family='"Liberation Sans", sans-serif' font-size="11" font-weight="bold" fill="#0a2e2e">VI 6.2</text><rect x="1.8" y="113.5" width="40" height="3" fill="#8c6020"/><rect x="1.8" y="117" width="40" height="13.8" fill="#22e4ec"/><text x="4" y="127.6" font-family='"Liberation Sans", sans-serif' font-size="11" font-weight="bold" fill="#0a2e2e">VI 6.2</text><rect x="0" y="130.8" width="40" height="1.4" fill="#b09050"/></svg><svg style="position:absolute;left:919px;top:158.5px" width="40" height="134" viewBox="0 0 40 134"><rect x="0" y="0" width="40" height="132" fill="#262626"/><rect x="0" y="0" width="1.8" height="132" fill="#c49a55"/><rect x="0" y="0" width="40" height="1.6" fill="#b09050"/><rect x="1.8" y="1.6" width="40" height="8.2" fill="#22e4ec"/><text x="3" y="8.8" font-family='"Liberation Sans", sans-serif' font-size="8" font-weight="bold" fill="#0a3a3a">ABCD.1</text><rect x="9.2" y="19.2" width="23" height="22.5" rx="1" fill="none" stroke="#575757" stroke-width="1.8"/><circle cx="21" cy="31" r="8.2" fill="none" stroke="#828282" stroke-width="3"/><circle cx="21" cy="31" r="3.8" fill="none" stroke="#6c6c6c" stroke-width="1.8"/><circle cx="21" cy="31" r="1" fill="#555"/><rect x="1.8" y="61.5" width="40" height="14.2" fill="#22e4ec"/><text x="4" y="72" font-family='"Liberation Sans", sans-serif' font-size="11" font-weight="bold" fill="#0a2e2e">VI 1.2</text><rect x="1.8" y="75.7" width="40" height="1.8" fill="#e09a20"/><text x="5" y="89.5" font-family='"Liberation Sans", sans-serif' font-size="9" fill="#b08a50">3</text><rect x="1.8" y="95" width="40" height="2.2" fill="#d0a070"/><rect x="1.8" y="99.3" width="40" height="14.2" fill="#22e4ec"/><text x="4" y="110" font-family='"Liberation Sans", sans-serif' font-size="11" font-weight="bold" fill="#0a2e2e">VI 1.2</text><rect x="1.8" y="113.5" width="40" height="3" fill="#8c6020"/><rect x="1.8" y="117" width="40" height="13.8" fill="#22e4ec"/><text x="4" y="127.6" font-family='"Liberation Sans", sans-serif' font-size="11" font-weight="bold" fill="#0a2e2e">VI 1.2</text><rect x="0" y="130.8" width="40" height="1.4" fill="#b09050"/></svg><svg style="position:absolute;left:919px;top:300px" width="40" height="134" viewBox="0 0 40 134"><rect x="0" y="0" width="40" height="132" fill="#262626"/><rect x="0" y="0" width="1.8" height="132" fill="#c49a55"/><rect x="0" y="0" width="40" height="1.6" fill="#b09050"/><rect x="1.8" y="1.6" width="40" height="8.2" fill="#22e4ec"/><text x="3" y="8.8" font-family='"Liberation Sans", sans-serif' font-size="8" font-weight="bold" fill="#0a3a3a">ABCD.1</text><rect x="9.2" y="19.2" width="23" height="22.5" rx="1" fill="none" stroke="#575757" stroke-width="1.8"/><circle cx="21" cy="31" r="8.2" fill="none" stroke="#828282" stroke-width="3"/><circle cx="21" cy="31" r="3.8" fill="none" stroke="#6c6c6c" stroke-width="1.8"/><circle cx="21" cy="31" r="1" fill="#555"/><rect x="1.8" y="61.5" width="40" height="14.2" fill="#22e4ec"/><text x="4" y="72" font-family='"Liberation Sans", sans-serif' font-size="11" font-weight="bold" fill="#0a2e2e">VI 1.2</text><rect x="1.8" y="75.7" width="40" height="1.8" fill="#e09a20"/><text x="5" y="89.5" font-family='"Liberation Sans", sans-serif' font-size="9" fill="#b08a50">3</text><rect x="1.8" y="95" width="40" height="2.2" fill="#d0a070"/><rect x="1.8" y="99.3" width="40" height="14.2" fill="#22e4ec"/><text x="4" y="110" font-family='"Liberation Sans", sans-serif' font-size="11" font-weight="bold" fill="#0a2e2e">VI 1.2</text><rect x="1.8" y="113.5" width="40" height="3" fill="#8c6020"/><rect x="1.8" y="117" width="40" height="13.8" fill="#22e4ec"/><text x="4" y="127.6" font-family='"Liberation Sans", sans-serif' font-size="11" font-weight="bold" fill="#0a2e2e">VI 1.2</text><rect x="0" y="130.8" width="40" height="1.4" fill="#b09050"/></svg><svg style="position:absolute;left:919px;top:440px" width="40" height="134" viewBox="0 0 40 134"><rect x="0" y="0" width="40" height="132" fill="#262626"/><rect x="0" y="0" width="1.8" height="132" fill="#c49a55"/><rect x="0" y="0" width="40" height="1.6" fill="#b09050"/><rect x="1.8" y="1.6" width="40" height="8.2" fill="#22e4ec"/><text x="3" y="8.8" font-family='"Liberation Sans", sans-serif' font-size="8" font-weight="bold" fill="#0a3a3a">ABCD.1</text><rect x="9.2" y="19.2" width="23" height="22.5" rx="1" fill="none" stroke="#575757" stroke-width="1.8"/><circle cx="21" cy="31" r="8.2" fill="none" stroke="#828282" stroke-width="3"/><circle cx="21" cy="31" r="3.8" fill="none" stroke="#6c6c6c" stroke-width="1.8"/><circle cx="21" cy="31" r="1" fill="#555"/><rect x="1.8" y="61.5" width="40" height="14.2" fill="#22e4ec"/><text x="4" y="72" font-family='"Liberation Sans", sans-serif' font-size="11" font-weight="bold" fill="#0a2e2e">VI 6.2</text><rect x="1.8" y="75.7" width="40" height="1.8" fill="#e09a20"/><text x="5" y="89.5" font-family='"Liberation Sans", sans-serif' font-size="9" fill="#b08a50">3</text><rect x="1.8" y="95" width="40" height="2.2" fill="#d0a070"/><rect x="1.8" y="99.3" width="40" height="14.2" fill="#22e4ec"/><text x="4" y="110" font-family='"Liberation Sans", sans-serif' font-size="11" font-weight="bold" fill="#0a2e2e">VI 6.2</text><rect x="1.8" y="113.5" width="40" height="3" fill="#8c6020"/><rect x="1.8" y="117" width="40" height="13.8" fill="#22e4ec"/><text x="4" y="127.6" font-family='"Liberation Sans", sans-serif' font-size="11" font-weight="bold" fill="#0a2e2e">VI 6.2</text><rect x="0" y="130.8" width="40" height="1.4" fill="#b09050"/></svg><div style="position:absolute;left:531px;top:608px;width:228px;height:105px;background:#fdfcf4"></div><svg style="position:absolute;left:531px;top:608px" width="228" height="105" viewBox="0 0 228 105"><g transform="translate(5,5)"><rect x="1" y="1" width="194" height="73" fill="#262626" stroke="#b89850" stroke-width="2"/><polygon points="2,2 49,2 40,10 2,10" fill="#f4a911"/><text x="3" y="9.4" font-family='"Liberation Sans", sans-serif' font-size="8" font-weight="bold" fill="#2a1a05" letter-spacing="-0.3">AB.1</text><text x="32.6" y="9.4" font-family='"Liberation Sans", sans-serif' font-size="8" font-weight="bold" fill="#2a1a05">1</text><rect x="69.5" y="3" width="13" height="12.5" rx="2" fill="#7a0d80" stroke="#d9a860" stroke-width="1.4"/><rect x="9.5" y="19.5" width="69" height="30" fill="none" stroke="#777" stroke-width="1"/><rect x="13" y="21" width="21" height="27" fill="none" stroke="#666" stroke-width="0.8"/><rect x="54" y="21" width="21" height="27" fill="none" stroke="#666" stroke-width="0.8"/><ellipse cx="23.9" cy="33.8" rx="8.8" ry="12" fill="none" stroke="#8a8a8a" stroke-width="1.6"/><circle cx="23.9" cy="33.8" r="4" fill="none" stroke="#6a6a6a" stroke-width="1"/><ellipse cx="61.5" cy="33.8" rx="8.8" ry="12" fill="none" stroke="#8a8a8a" stroke-width="1.6"/><circle cx="61.5" cy="33.8" r="4" fill="none" stroke="#6a6a6a" stroke-width="1"/><line x1="36" y1="28.8" x2="50.4" y2="28.8" stroke="#707070" stroke-width="0.9"/><line x1="36" y1="34.9" x2="50.4" y2="34.9" stroke="#707070" stroke-width="0.9"/><line x1="36" y1="39.9" x2="50.4" y2="39.9" stroke="#707070" stroke-width="0.9"/><path d="M36,22.5 Q43,20 50.4,22.5" fill="none" stroke="#666" stroke-width="0.8"/><line x1="43.2" y1="21" x2="43.2" y2="48" stroke="#666" stroke-width="0.8"/><text x="77" y="28.8" font-family='"Liberation Sans", sans-serif' font-size="8.6" font-weight="bold" fill="#dddddd" letter-spacing="-0.6">HP: 1</text><text x="77" y="38.9" font-family='"Liberation Sans", sans-serif' font-size="8.6" font-weight="bold" fill="#dddddd" letter-spacing="-0.6">LP: 2.1</text><rect x="106" y="6.5" width="30" height="13.5" rx="1.5" fill="#68686d"/><text x="121" y="16.3" font-family='"Liberation Sans", sans-serif' font-size="8.4" font-weight="bold" fill="#cfcfcf" text-anchor="middle">MENU</text><rect x="106" y="24" width="30" height="14.5" rx="1.5" fill="#178317"/><text x="121" y="34.2" font-family='"Liberation Sans", sans-serif' font-size="8.4" font-weight="bold" fill="#8fd88f" text-anchor="middle">MUTE</text><rect x="106" y="42.5" width="30" height="13" rx="1.5" fill="#68686d"/><text x="121" y="52" font-family='"Liberation Sans", sans-serif' font-size="8.4" font-weight="bold" fill="#cfcfcf" text-anchor="middle">EQ</text><rect x="144.5" y="5.5" width="13" height="52" fill="#8a8a8a"/><rect x="144.5" y="10.1" width="13" height="1.8" fill="#eeeeee"/><rect x="144.5" y="16.8" width="13" height="1.8" fill="#eeeeee"/><rect x="144.5" y="20.9" width="13" height="1.8" fill="#eeeeee"/><rect x="144.5" y="27.6" width="13" height="1.8" fill="#eeeeee"/><rect x="144.5" y="34.2" width="13" height="1.8" fill="#eeeeee"/><rect x="144.5" y="38.3" width="13" height="1.8" fill="#eeeeee"/><rect x="144.5" y="45.0" width="13" height="1.8" fill="#eeeeee"/><rect x="144.5" y="51.7" width="13" height="1.8" fill="#eeeeee"/><rect x="144.5" y="55.9" width="13" height="1.8" fill="#eeeeee"/><text x="159" y="8.5" font-family='"Liberation Sans", sans-serif' font-size="6" fill="#bbbbbb">+10</text><text x="159" y="37" font-family='"Liberation Sans", sans-serif' font-size="6" fill="#bbbbbb">-30</text><text x="159" y="58.5" font-family='"Liberation Sans", sans-serif' font-size="6" fill="#bbbbbb">-60</text><circle cx="180.5" cy="9" r="4.3" fill="#1f9a2a"/><rect x="176.5" y="23.5" width="9" height="34" fill="#8a8a8a"/><rect x="176.5" y="24.4" width="9" height="1.8" fill="#eeeeee"/><rect x="176.5" y="28.5" width="9" height="1.8" fill="#eeeeee"/><rect x="176.5" y="35.2" width="9" height="1.8" fill="#eeeeee"/><rect x="176.5" y="41.8" width="9" height="1.8" fill="#eeeeee"/><rect x="176.5" y="45.9" width="9" height="1.8" fill="#eeeeee"/><rect x="176.5" y="52.6" width="9" height="1.8" fill="#eeeeee"/><polygon points="2,61.5 92,61.5 102,73 2,73" fill="#f4a911"/><text x="4" y="71" font-family='"Liberation Sans", sans-serif' font-size="10.6" font-weight="bold" fill="#2a1a05" letter-spacing="-0.2">VI 1.2-13</text><rect x="1" y="76.5" width="155.5" height="18.5" fill="#262626" stroke="#b89850" stroke-width="2"/><text x="6" y="90" font-family='"Liberation Sans", sans-serif' font-size="9" fill="#b8b0a0">1</text><rect x="132.5" y="80.5" width="9" height="10" fill="#444"/><rect x="145" y="80.5" width="9.5" height="10" fill="#5a5a5a"/><path d="M149.7,82 v7 M146.2,85.5 h7" stroke="#999" stroke-width="1.2"/><rect x="200" y="1.2" width="16.5" height="63" fill="#262626" stroke="#4a3010" stroke-width="1.4"/><rect x="201.2" y="2.4" width="14.2" height="14" fill="#117a11"/><path d="M204.8,9.7 L207.6,12.8 L212.3,6.6" fill="none" stroke="#e8f8e8" stroke-width="2.3" stroke-linecap="round" stroke-linejoin="round"/><rect x="201.2" y="18" width="14.2" height="14.5" fill="#1f9fe0"/><path d="M205.5,20.5 h6.5 l-3.25,4.5 l3.25,4.5 h-6.5 l3.25,-4.5 z" fill="#dff" stroke="#dff" stroke-width="0.6"/></g></svg><svg style="position:absolute;left:630px;top:759px" width="186" height="112" viewBox="0 0 186 112"><rect x="0.9" y="0.9" width="158" height="108.5" fill="#262626" stroke="#b09050" stroke-width="1.8"/><rect x="2.3" y="2.3" width="155.2" height="105.7" fill="none" stroke="#3a2808" stroke-width="1"/><polygon points="2,2 65,2 59,11 2,11" fill="#f4a911"/><text x="4.5" y="9.6" font-family='"Liberation Sans", sans-serif' font-size="8.5" font-weight="bold" fill="#2a1a05" letter-spacing="-0.5">A.1</text><rect x="71.5" y="3.5" width="11.5" height="12" rx="2" fill="#7d0d85" stroke="#d9a860" stroke-width="1.4"/><rect x="6.0" y="20.5" width="58" height="23" fill="none" stroke="#8a8a8a" stroke-width="1"/><line x1="14.0" y1="20.5" x2="14.0" y2="43.5" stroke="#6a6a6a" stroke-width="1"/><line x1="56.0" y1="20.5" x2="56.0" y2="43.5" stroke="#6a6a6a" stroke-width="1"/><circle cx="24.1" cy="31.5" r="8.6" fill="none" stroke="#8a8a8a" stroke-width="1.4"/><circle cx="24.1" cy="31.5" r="6.2" fill="none" stroke="#555" stroke-width="0.8"/><ellipse cx="24.1" cy="31.5" rx="3.6" ry="2.8" fill="none" stroke="#7a7a7a" stroke-width="1"/><circle cx="44.3" cy="31.5" r="8.6" fill="none" stroke="#8a8a8a" stroke-width="1.4"/><circle cx="44.3" cy="31.5" r="6.2" fill="none" stroke="#555" stroke-width="0.8"/><ellipse cx="44.3" cy="31.5" rx="3.6" ry="2.8" fill="none" stroke="#7a7a7a" stroke-width="1"/><rect x="70" y="21.5" width="30" height="13.5" rx="1.5" fill="#68686d"/><text x="85" y="31.3" font-family='"Liberation Sans", sans-serif' font-size="8.4" font-weight="bold" fill="#cfcfcf" text-anchor="middle">MENU</text><rect x="70" y="38.5" width="30" height="14" rx="1.5" fill="#178317"/><text x="85" y="48.5" font-family='"Liberation Sans", sans-serif' font-size="8.4" font-weight="bold" fill="#8fd88f" text-anchor="middle">MUTE</text><rect x="70" y="56" width="30" height="13.5" rx="1.5" fill="#68686d"/><text x="85" y="65.8" font-family='"Liberation Sans", sans-serif' font-size="8.4" font-weight="bold" fill="#cfcfcf" text-anchor="middle">EQ</text><rect x="108" y="12" width="12.6" height="52.5" fill="#8a8a8a"/><rect x="108" y="16.6" width="12.6" height="1.8" fill="#eeeeee"/><rect x="108" y="23.3" width="12.6" height="1.8" fill="#eeeeee"/><rect x="108" y="27.4" width="12.6" height="1.8" fill="#eeeeee"/><rect x="108" y="34.1" width="12.6" height="1.8" fill="#eeeeee"/><rect x="108" y="40.7" width="12.6" height="1.8" fill="#eeeeee"/><rect x="108" y="44.8" width="12.6" height="1.8" fill="#eeeeee"/><rect x="108" y="51.5" width="12.6" height="1.8" fill="#eeeeee"/><rect x="108" y="58.2" width="12.6" height="1.8" fill="#eeeeee"/><rect x="108" y="62.4" width="12.6" height="1.8" fill="#eeeeee"/><text x="122" y="14.5" font-family='"Liberation Sans", sans-serif' font-size="6" fill="#bbbbbb">+10</text><text x="122" y="43.5" font-family='"Liberation Sans", sans-serif' font-size="6" fill="#bbbbbb">-30</text><text x="122" y="64.5" font-family='"Liberation Sans", sans-serif' font-size="6" fill="#bbbbbb">-60</text><circle cx="144.5" cy="9.3" r="4.3" fill="#1f9a2a"/><rect x="139" y="24" width="10.8" height="34" fill="#8a8a8a"/><rect x="139" y="24.9" width="10.8" height="1.8" fill="#eeeeee"/><rect x="139" y="29.0" width="10.8" height="1.8" fill="#eeeeee"/><rect x="139" y="35.7" width="10.8" height="1.8" fill="#eeeeee"/><rect x="139" y="42.3" width="10.8" height="1.8" fill="#eeeeee"/><rect x="139" y="46.4" width="10.8" height="1.8" fill="#eeeeee"/><rect x="139" y="53.1" width="10.8" height="1.8" fill="#eeeeee"/><polygon points="2,75.5 93,75.5 103,90.5 2,90.5" fill="#f4a911"/><text x="5" y="86.2" font-family='"Liberation Sans", sans-serif' font-size="10.6" font-weight="bold" fill="#2a1a05" letter-spacing="-0.2">VI 6.2-10</text><rect x="2" y="90.5" width="156" height="1.5" fill="#c8a060"/><text x="7" y="104" font-family='"Liberation Sans", sans-serif' font-size="9" fill="#b8b0a0">1</text><rect x="134" y="95.5" width="9.5" height="10" fill="#444"/><rect x="146" y="95.5" width="10" height="10" fill="#5a5a5a"/><line x1="136" y1="100.5" x2="141.5" y2="100.5" stroke="#777" stroke-width="1"/><path d="M151,97 v7 M147.5,100.5 h7" stroke="#999" stroke-width="1.2"/><rect x="162.6" y="0.9" width="18.3" height="65.5" fill="#262626" stroke="#b09050" stroke-width="1.8"/><rect x="164.0" y="2.3" width="15.5" height="62.7" fill="none" stroke="#3a2808" stroke-width="1"/><rect x="163.7" y="2" width="16" height="15.5" fill="#117a11"/><path d="M167.7,10.1 L170.9,13.5 L176.2,6.6" fill="none" stroke="#e8f8e8" stroke-width="2.3" stroke-linecap="round" stroke-linejoin="round"/></svg><svg style="position:absolute;left:826px;top:759px" width="186" height="112" viewBox="0 0 186 112"><rect x="0.9" y="0.9" width="158" height="108.5" fill="#262626" stroke="#b09050" stroke-width="1.8"/><rect x="2.3" y="2.3" width="155.2" height="105.7" fill="none" stroke="#3a2808" stroke-width="1"/><polygon points="2,2 65,2 59,11 2,11" fill="#f4a911"/><text x="4.5" y="9.6" font-family='"Liberation Sans", sans-serif' font-size="8.5" font-weight="bold" fill="#2a1a05" letter-spacing="-0.5">B.1</text><rect x="71.5" y="3.5" width="11.5" height="12" rx="2" fill="#168a16" stroke="#d9a860" stroke-width="1.4"/><rect x="6.0" y="20.5" width="58" height="23" fill="none" stroke="#8a8a8a" stroke-width="1"/><line x1="14.0" y1="20.5" x2="14.0" y2="43.5" stroke="#6a6a6a" stroke-width="1"/><line x1="56.0" y1="20.5" x2="56.0" y2="43.5" stroke="#6a6a6a" stroke-width="1"/><circle cx="24.1" cy="31.5" r="8.6" fill="none" stroke="#8a8a8a" stroke-width="1.4"/><circle cx="24.1" cy="31.5" r="6.2" fill="none" stroke="#555" stroke-width="0.8"/><ellipse cx="24.1" cy="31.5" rx="3.6" ry="2.8" fill="none" stroke="#7a7a7a" stroke-width="1"/><circle cx="44.3" cy="31.5" r="8.6" fill="none" stroke="#8a8a8a" stroke-width="1.4"/><circle cx="44.3" cy="31.5" r="6.2" fill="none" stroke="#555" stroke-width="0.8"/><ellipse cx="44.3" cy="31.5" rx="3.6" ry="2.8" fill="none" stroke="#7a7a7a" stroke-width="1"/><rect x="70" y="21.5" width="30" height="13.5" rx="1.5" fill="#68686d"/><text x="85" y="31.3" font-family='"Liberation Sans", sans-serif' font-size="8.4" font-weight="bold" fill="#cfcfcf" text-anchor="middle">MENU</text><rect x="70" y="38.5" width="30" height="14" rx="1.5" fill="#178317"/><text x="85" y="48.5" font-family='"Liberation Sans", sans-serif' font-size="8.4" font-weight="bold" fill="#8fd88f" text-anchor="middle">MUTE</text><rect x="70" y="56" width="30" height="13.5" rx="1.5" fill="#68686d"/><text x="85" y="65.8" font-family='"Liberation Sans", sans-serif' font-size="8.4" font-weight="bold" fill="#cfcfcf" text-anchor="middle">EQ</text><rect x="108" y="12" width="12.6" height="52.5" fill="#8a8a8a"/><rect x="108" y="16.6" width="12.6" height="1.8" fill="#eeeeee"/><rect x="108" y="23.3" width="12.6" height="1.8" fill="#eeeeee"/><rect x="108" y="27.4" width="12.6" height="1.8" fill="#eeeeee"/><rect x="108" y="34.1" width="12.6" height="1.8" fill="#eeeeee"/><rect x="108" y="40.7" width="12.6" height="1.8" fill="#eeeeee"/><rect x="108" y="44.8" width="12.6" height="1.8" fill="#eeeeee"/><rect x="108" y="51.5" width="12.6" height="1.8" fill="#eeeeee"/><rect x="108" y="58.2" width="12.6" height="1.8" fill="#eeeeee"/><rect x="108" y="62.4" width="12.6" height="1.8" fill="#eeeeee"/><text x="122" y="14.5" font-family='"Liberation Sans", sans-serif' font-size="6" fill="#bbbbbb">+10</text><text x="122" y="43.5" font-family='"Liberation Sans", sans-serif' font-size="6" fill="#bbbbbb">-30</text><text x="122" y="64.5" font-family='"Liberation Sans", sans-serif' font-size="6" fill="#bbbbbb">-60</text><circle cx="144.5" cy="9.3" r="4.3" fill="#1f9a2a"/><rect x="139" y="24" width="10.8" height="34" fill="#8a8a8a"/><rect x="139" y="24.9" width="10.8" height="1.8" fill="#eeeeee"/><rect x="139" y="29.0" width="10.8" height="1.8" fill="#eeeeee"/><rect x="139" y="35.7" width="10.8" height="1.8" fill="#eeeeee"/><rect x="139" y="42.3" width="10.8" height="1.8" fill="#eeeeee"/><rect x="139" y="46.4" width="10.8" height="1.8" fill="#eeeeee"/><rect x="139" y="53.1" width="10.8" height="1.8" fill="#eeeeee"/><polygon points="2,75.5 93,75.5 103,90.5 2,90.5" fill="#f4a911"/><text x="5" y="86.2" font-family='"Liberation Sans", sans-serif' font-size="10.6" font-weight="bold" fill="#2a1a05" letter-spacing="-0.2">VI 6.2-10</text><rect x="2" y="90.5" width="156" height="1.5" fill="#c8a060"/><text x="7" y="104" font-family='"Liberation Sans", sans-serif' font-size="9" fill="#b8b0a0">1</text><rect x="134" y="95.5" width="9.5" height="10" fill="#444"/><rect x="146" y="95.5" width="10" height="10" fill="#5a5a5a"/><line x1="136" y1="100.5" x2="141.5" y2="100.5" stroke="#777" stroke-width="1"/><path d="M151,97 v7 M147.5,100.5 h7" stroke="#999" stroke-width="1.2"/><rect x="162.6" y="0.9" width="18.3" height="65.5" fill="#262626" stroke="#b09050" stroke-width="1.8"/><rect x="164.0" y="2.3" width="15.5" height="62.7" fill="none" stroke="#3a2808" stroke-width="1"/><rect x="163.7" y="2" width="16" height="15.5" fill="#117a11"/><path d="M167.7,10.1 L170.9,13.5 L176.2,6.6" fill="none" stroke="#e8f8e8" stroke-width="2.3" stroke-linecap="round" stroke-linejoin="round"/></svg><svg style="position:absolute;left:634px;top:896px" width="186" height="112" viewBox="0 0 186 112"><rect x="0.9" y="0.9" width="158" height="108.5" fill="#262626" stroke="#b09050" stroke-width="1.8"/><rect x="2.3" y="2.3" width="155.2" height="105.7" fill="none" stroke="#3a2808" stroke-width="1"/><polygon points="2,2 65,2 59,11 2,11" fill="#f4a911"/><text x="4.5" y="9.6" font-family='"Liberation Sans", sans-serif' font-size="8.5" font-weight="bold" fill="#2a1a05" letter-spacing="-0.5">C.1</text><rect x="71.5" y="3.5" width="11.5" height="12" rx="2" fill="#2aa8e8" stroke="#d9a860" stroke-width="1.4"/><rect x="6.0" y="20.5" width="58" height="23" fill="none" stroke="#8a8a8a" stroke-width="1"/><line x1="14.0" y1="20.5" x2="14.0" y2="43.5" stroke="#6a6a6a" stroke-width="1"/><line x1="56.0" y1="20.5" x2="56.0" y2="43.5" stroke="#6a6a6a" stroke-width="1"/><circle cx="24.1" cy="31.5" r="8.6" fill="none" stroke="#8a8a8a" stroke-width="1.4"/><circle cx="24.1" cy="31.5" r="6.2" fill="none" stroke="#555" stroke-width="0.8"/><ellipse cx="24.1" cy="31.5" rx="3.6" ry="2.8" fill="none" stroke="#7a7a7a" stroke-width="1"/><circle cx="44.3" cy="31.5" r="8.6" fill="none" stroke="#8a8a8a" stroke-width="1.4"/><circle cx="44.3" cy="31.5" r="6.2" fill="none" stroke="#555" stroke-width="0.8"/><ellipse cx="44.3" cy="31.5" rx="3.6" ry="2.8" fill="none" stroke="#7a7a7a" stroke-width="1"/><rect x="70" y="21.5" width="30" height="13.5" rx="1.5" fill="#68686d"/><text x="85" y="31.3" font-family='"Liberation Sans", sans-serif' font-size="8.4" font-weight="bold" fill="#cfcfcf" text-anchor="middle">MENU</text><rect x="70" y="38.5" width="30" height="14" rx="1.5" fill="#178317"/><text x="85" y="48.5" font-family='"Liberation Sans", sans-serif' font-size="8.4" font-weight="bold" fill="#8fd88f" text-anchor="middle">MUTE</text><rect x="70" y="56" width="30" height="13.5" rx="1.5" fill="#68686d"/><text x="85" y="65.8" font-family='"Liberation Sans", sans-serif' font-size="8.4" font-weight="bold" fill="#cfcfcf" text-anchor="middle">EQ</text><rect x="108" y="12" width="12.6" height="52.5" fill="#8a8a8a"/><rect x="108" y="16.6" width="12.6" height="1.8" fill="#eeeeee"/><rect x="108" y="23.3" width="12.6" height="1.8" fill="#eeeeee"/><rect x="108" y="27.4" width="12.6" height="1.8" fill="#eeeeee"/><rect x="108" y="34.1" width="12.6" height="1.8" fill="#eeeeee"/><rect x="108" y="40.7" width="12.6" height="1.8" fill="#eeeeee"/><rect x="108" y="44.8" width="12.6" height="1.8" fill="#eeeeee"/><rect x="108" y="51.5" width="12.6" height="1.8" fill="#eeeeee"/><rect x="108" y="58.2" width="12.6" height="1.8" fill="#eeeeee"/><rect x="108" y="62.4" width="12.6" height="1.8" fill="#eeeeee"/><text x="122" y="14.5" font-family='"Liberation Sans", sans-serif' font-size="6" fill="#bbbbbb">+10</text><text x="122" y="43.5" font-family='"Liberation Sans", sans-serif' font-size="6" fill="#bbbbbb">-30</text><text x="122" y="64.5" font-family='"Liberation Sans", sans-serif' font-size="6" fill="#bbbbbb">-60</text><circle cx="144.5" cy="9.3" r="4.3" fill="#1f9a2a"/><rect x="139" y="24" width="10.8" height="34" fill="#8a8a8a"/><rect x="139" y="24.9" width="10.8" height="1.8" fill="#eeeeee"/><rect x="139" y="29.0" width="10.8" height="1.8" fill="#eeeeee"/><rect x="139" y="35.7" width="10.8" height="1.8" fill="#eeeeee"/><rect x="139" y="42.3" width="10.8" height="1.8" fill="#eeeeee"/><rect x="139" y="46.4" width="10.8" height="1.8" fill="#eeeeee"/><rect x="139" y="53.1" width="10.8" height="1.8" fill="#eeeeee"/><polygon points="2,75.5 93,75.5 103,90.5 2,90.5" fill="#f4a911"/><text x="5" y="86.2" font-family='"Liberation Sans", sans-serif' font-size="10.6" font-weight="bold" fill="#2a1a05" letter-spacing="-0.2">VI 6.2-04</text><rect x="2" y="90.5" width="156" height="1.5" fill="#c8a060"/><text x="7" y="104" font-family='"Liberation Sans", sans-serif' font-size="9" fill="#b8b0a0">1</text><rect x="134" y="95.5" width="9.5" height="10" fill="#444"/><rect x="146" y="95.5" width="10" height="10" fill="#5a5a5a"/><line x1="136" y1="100.5" x2="141.5" y2="100.5" stroke="#777" stroke-width="1"/><path d="M151,97 v7 M147.5,100.5 h7" stroke="#999" stroke-width="1.2"/><rect x="162.6" y="0.9" width="18.3" height="65.5" fill="#262626" stroke="#b09050" stroke-width="1.8"/><rect x="164.0" y="2.3" width="15.5" height="62.7" fill="none" stroke="#3a2808" stroke-width="1"/><rect x="163.7" y="2" width="16" height="15.5" fill="#117a11"/><path d="M167.7,10.1 L170.9,13.5 L176.2,6.6" fill="none" stroke="#e8f8e8" stroke-width="2.3" stroke-linecap="round" stroke-linejoin="round"/></svg><svg style="position:absolute;left:830px;top:896px" width="186" height="112" viewBox="0 0 186 112"><rect x="0.9" y="0.9" width="158" height="108.5" fill="#262626" stroke="#b09050" stroke-width="1.8"/><rect x="2.3" y="2.3" width="155.2" height="105.7" fill="none" stroke="#3a2808" stroke-width="1"/><polygon points="2,2 65,2 59,11 2,11" fill="#f4a911"/><text x="4.5" y="9.6" font-family='"Liberation Sans", sans-serif' font-size="8.5" font-weight="bold" fill="#2a1a05" letter-spacing="-0.5">D.1</text><rect x="71.5" y="3.5" width="11.5" height="12" rx="2" fill="#f4a911" stroke="#d9a860" stroke-width="1.4"/><rect x="6.0" y="20.5" width="58" height="23" fill="none" stroke="#8a8a8a" stroke-width="1"/><line x1="14.0" y1="20.5" x2="14.0" y2="43.5" stroke="#6a6a6a" stroke-width="1"/><line x1="56.0" y1="20.5" x2="56.0" y2="43.5" stroke="#6a6a6a" stroke-width="1"/><circle cx="24.1" cy="31.5" r="8.6" fill="none" stroke="#8a8a8a" stroke-width="1.4"/><circle cx="24.1" cy="31.5" r="6.2" fill="none" stroke="#555" stroke-width="0.8"/><ellipse cx="24.1" cy="31.5" rx="3.6" ry="2.8" fill="none" stroke="#7a7a7a" stroke-width="1"/><circle cx="44.3" cy="31.5" r="8.6" fill="none" stroke="#8a8a8a" stroke-width="1.4"/><circle cx="44.3" cy="31.5" r="6.2" fill="none" stroke="#555" stroke-width="0.8"/><ellipse cx="44.3" cy="31.5" rx="3.6" ry="2.8" fill="none" stroke="#7a7a7a" stroke-width="1"/><rect x="70" y="21.5" width="30" height="13.5" rx="1.5" fill="#68686d"/><text x="85" y="31.3" font-family='"Liberation Sans", sans-serif' font-size="8.4" font-weight="bold" fill="#cfcfcf" text-anchor="middle">MENU</text><rect x="70" y="38.5" width="30" height="14" rx="1.5" fill="#178317"/><text x="85" y="48.5" font-family='"Liberation Sans", sans-serif' font-size="8.4" font-weight="bold" fill="#8fd88f" text-anchor="middle">MUTE</text><rect x="70" y="56" width="30" height="13.5" rx="1.5" fill="#68686d"/><text x="85" y="65.8" font-family='"Liberation Sans", sans-serif' font-size="8.4" font-weight="bold" fill="#cfcfcf" text-anchor="middle">EQ</text><rect x="108" y="12" width="12.6" height="52.5" fill="#8a8a8a"/><rect x="108" y="16.6" width="12.6" height="1.8" fill="#eeeeee"/><rect x="108" y="23.3" width="12.6" height="1.8" fill="#eeeeee"/><rect x="108" y="27.4" width="12.6" height="1.8" fill="#eeeeee"/><rect x="108" y="34.1" width="12.6" height="1.8" fill="#eeeeee"/><rect x="108" y="40.7" width="12.6" height="1.8" fill="#eeeeee"/><rect x="108" y="44.8" width="12.6" height="1.8" fill="#eeeeee"/><rect x="108" y="51.5" width="12.6" height="1.8" fill="#eeeeee"/><rect x="108" y="58.2" width="12.6" height="1.8" fill="#eeeeee"/><rect x="108" y="62.4" width="12.6" height="1.8" fill="#eeeeee"/><text x="122" y="14.5" font-family='"Liberation Sans", sans-serif' font-size="6" fill="#bbbbbb">+10</text><text x="122" y="43.5" font-family='"Liberation Sans", sans-serif' font-size="6" fill="#bbbbbb">-30</text><text x="122" y="64.5" font-family='"Liberation Sans", sans-serif' font-size="6" fill="#bbbbbb">-60</text><circle cx="144.5" cy="9.3" r="4.3" fill="#1f9a2a"/><rect x="139" y="24" width="10.8" height="34" fill="#8a8a8a"/><rect x="139" y="24.9" width="10.8" height="1.8" fill="#eeeeee"/><rect x="139" y="29.0" width="10.8" height="1.8" fill="#eeeeee"/><rect x="139" y="35.7" width="10.8" height="1.8" fill="#eeeeee"/><rect x="139" y="42.3" width="10.8" height="1.8" fill="#eeeeee"/><rect x="139" y="46.4" width="10.8" height="1.8" fill="#eeeeee"/><rect x="139" y="53.1" width="10.8" height="1.8" fill="#eeeeee"/><polygon points="2,75.5 93,75.5 103,90.5 2,90.5" fill="#f4a911"/><text x="5" y="86.2" font-family='"Liberation Sans", sans-serif' font-size="10.6" font-weight="bold" fill="#2a1a05" letter-spacing="-0.2">VI 6.2-04</text><rect x="2" y="90.5" width="156" height="1.5" fill="#c8a060"/><text x="7" y="104" font-family='"Liberation Sans", sans-serif' font-size="9" fill="#b8b0a0">1</text><rect x="134" y="95.5" width="9.5" height="10" fill="#444"/><rect x="146" y="95.5" width="10" height="10" fill="#5a5a5a"/><line x1="136" y1="100.5" x2="141.5" y2="100.5" stroke="#777" stroke-width="1"/><path d="M151,97 v7 M147.5,100.5 h7" stroke="#999" stroke-width="1.2"/><rect x="162.6" y="0.9" width="18.3" height="65.5" fill="#262626" stroke="#b09050" stroke-width="1.8"/><rect x="164.0" y="2.3" width="15.5" height="62.7" fill="none" stroke="#3a2808" stroke-width="1"/><rect x="163.7" y="2" width="16" height="15.5" fill="#117a11"/><path d="M167.7,10.1 L170.9,13.5 L176.2,6.6" fill="none" stroke="#e8f8e8" stroke-width="2.3" stroke-linecap="round" stroke-linejoin="round"/></svg></body></html>
